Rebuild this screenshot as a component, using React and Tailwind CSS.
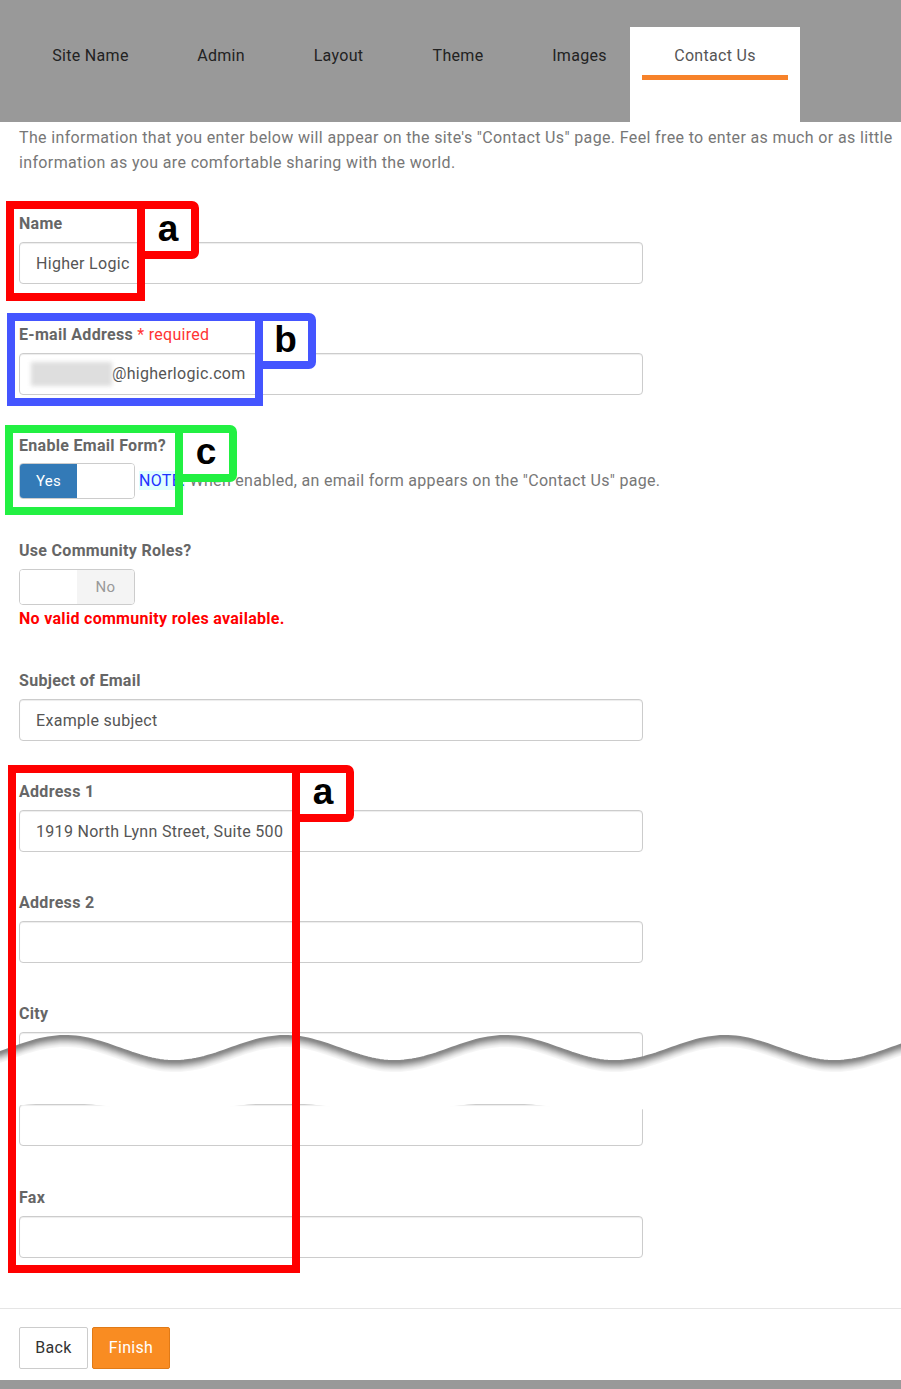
import React from 'react'

const tabs = [
  { name: 'Site Name', cls: 'ml-[18px] w-[145px]' },
  { name: 'Admin', cls: 'w-[116px]' },
  { name: 'Layout', cls: 'w-[119px]' },
  { name: 'Theme', cls: 'w-[120px]' },
  { name: 'Images', cls: 'w-[112px] pl-[11px]' },
]

function wavePoints(base, amp, phase, step = 4) {
  const pts = []
  for (let x = 0; x <= 904; x += step) {
    const y = base - amp * Math.cos((2 * Math.PI * (x - phase)) / 220)
    pts.push([x, y])
  }
  return pts
}

function TornEdge() {
  const top = wavePoints(21.5, 12.5, 65)
  const bottom = wavePoints(80, 4, 60).reverse()
  const fill = [...top, ...bottom].map(([x, y]) => `${x},${y.toFixed(1)}`).join(' ')
  const shades = ['#f6f6f6', '#f0f0f0', '#e8e8e8', '#dedede', '#d2d2d2', '#c6c6c6', '#b8b8b8', '#aaaaaa', '#9c9c9c', '#909090', '#888888']
  return (
    <svg className="absolute left-0 top-[1027px]" width="901" height="92" viewBox="0 0 901 92">
      <polygon points={fill} fill="#ffffff" />
      {shades.map((c, i) => {
        const off = shades.length - 1 - i
        const d = top.map(([x, y], j) => `${j === 0 ? 'M' : 'L'}${x},${(y + off).toFixed(1)}`).join(' ')
        return <path key={i} d={d} fill="none" stroke={c} strokeWidth="2" />
      })}
    </svg>
  )
}

function Callout({ color, box, tag, letter }) {
  return (
    <>
      <div className={`absolute border-8 ${color} ${box}`}></div>
      <div className={`absolute border-8 ${color} bg-white rounded-r-[7px] flex items-center justify-center ${tag}`}>
        <span className="text-[37px] leading-none font-bold tracking-normal text-black font-['Liberation_Sans',Arial,sans-serif] -mt-[4px]">
          {letter}
        </span>
      </div>
    </>
  )
}

function Field({ label, value, extra, className = '' }) {
  return (
    <div className={`mb-[41px] ${className}`}>
      <div className="text-base leading-[20px] font-bold text-[#666] mb-[8px]">
        {label}
        {extra}
      </div>
      <input
        readOnly
        defaultValue={value}
        className="block w-[624px] h-[42px] border border-[#ccc] rounded-[4px] pl-[16px] text-base tracking-[0.3px] text-[#555] shadow-[inset_0_1px_1px_rgba(0,0,0,0.075)] outline-none"
      />
    </div>
  )
}

export default function App() {
  return (
    <div className="relative w-[901px] h-[1389px] bg-white overflow-hidden font-['Roboto',sans-serif] tracking-[0.3px]">
      {/* Tabs */}
      <div className="flex items-start h-[122px] bg-[#999] pt-[27px]">
        {tabs.map((t) => (
          <div key={t.name} className={`h-[95px] pt-[17px] text-center text-base leading-[24px] text-[#222] ${t.cls}`}>
            {t.name}
          </div>
        ))}
        <div className="w-[170px] h-[95px] bg-white pt-[17px] text-center">
          <div className="text-base leading-[24px] text-[#555]">Contact Us</div>
          <div className="mt-[7px] mx-[12px] h-[5px] bg-[#f7822a]"></div>
        </div>
      </div>

      {/* Form */}
      <div className="pl-[19px] pr-[4px]">
        <p className="pt-[3px] text-base leading-[25px] text-[#777] tracking-[0.36px]">
          The information that you enter below will appear on the site's "Contact Us" page. Feel free to enter as much or as little information as you are comfortable sharing with the world.
        </p>

        <div className="mt-[39px]">
          <Field label="Name" value="Higher Logic" />

          <div className="mb-[41px]">
            <div className="text-base leading-[20px] font-bold text-[#666] mb-[8px]">
              E-mail Address <span className="font-normal text-[#f33]">* required</span>
            </div>
            <div className="flex items-center w-[624px] h-[42px] border border-[#ccc] rounded-[4px] pl-[11px] text-base text-[#555] shadow-[inset_0_1px_1px_rgba(0,0,0,0.075)]">
              <span className="inline-block w-[81px] h-[24px] bg-[#dedede] blur-[2px]"></span>
              <span>@higherlogic.com</span>
            </div>
          </div>

          <div className="mb-[42px]">
            <div className="text-base leading-[20px] font-bold text-[#666] mb-[7px]">Enable Email Form?</div>
            <div className="flex items-center gap-[4px]">
              <div className="flex w-[116px] h-[36px] border border-[#ccc] rounded-[4px] overflow-hidden text-[15px]">
                <div className="w-[57px] bg-[#337ab7] text-white flex items-center justify-center">Yes</div>
                <div className="flex-1 bg-white"></div>
              </div>
              <div className="text-base text-[#777]">
                <span className="bg-[#e0ffff] text-[#2233ff]">NOTE:</span> When enabled, an email form appears on the "Contact Us" page.
              </div>
            </div>
          </div>

          <div className="mb-[42px]">
            <div className="text-base leading-[20px] font-bold text-[#666] mb-[8px]">Use Community Roles?</div>
            <div className="flex w-[116px] h-[36px] border border-[#ccc] rounded-[4px] overflow-hidden text-[15px]">
              <div className="w-[57px] bg-white"></div>
              <div className="flex-1 bg-[#f4f4f4] text-[#999] flex items-center justify-center">No</div>
            </div>
            <div className="mt-[4px] text-base leading-[20px] font-bold text-[#f00]">No valid community roles available.</div>
          </div>

          <Field label="Subject of Email" value="Example subject" />
          <Field label="Address 1" value="1919 North Lynn Street, Suite 500" />
          <Field label="Address 2" value="" />
          <Field label="City" value="" className="!mb-[30px]" />
          <input
            readOnly
            className="block w-[624px] h-[42px] border border-[#ccc] rounded-[4px] shadow-[inset_0_1px_1px_rgba(0,0,0,0.075)] outline-none mb-[42px]"
          />
          <Field label="Fax" value="" className="!mb-[50px]" />
        </div>
      </div>

      {/* Footer */}
      <div className="border-t border-[#e5e5e5] pt-[18px] pl-[19px] flex gap-[4px]">
        <button className="w-[69px] h-[42px] border border-[#ccc] rounded-[2px] bg-white text-base text-[#333]">Back</button>
        <button className="w-[78px] h-[42px] border border-[#e07a17] rounded-[2px] bg-[#f98c22] text-base text-white">Finish</button>
      </div>
      <div className="absolute left-0 bottom-0 w-full h-[9px] bg-[#999]"></div>

      <TornEdge />

      {/* Annotations */}
      <Callout color="border-[#ff0000]" box="left-[6px] top-[201px] w-[139px] h-[100px]" tag="left-[137px] top-[201px] w-[62px] h-[58px]" letter="a" />
      <Callout color="border-[#4455ff]" box="left-[7px] top-[313px] w-[256px] h-[93px]" tag="left-[255px] top-[313px] w-[61px] h-[56px]" letter="b" />
      <Callout color="border-[#22f042]" box="left-[5px] top-[425px] w-[178px] h-[90px]" tag="left-[175px] top-[425px] w-[62px] h-[57px]" letter="c" />
      <Callout color="border-[#ff0000]" box="left-[8px] top-[765px] w-[292px] h-[508px]" tag="left-[292px] top-[765px] w-[62px] h-[57px]" letter="a" />
    </div>
  )
}
